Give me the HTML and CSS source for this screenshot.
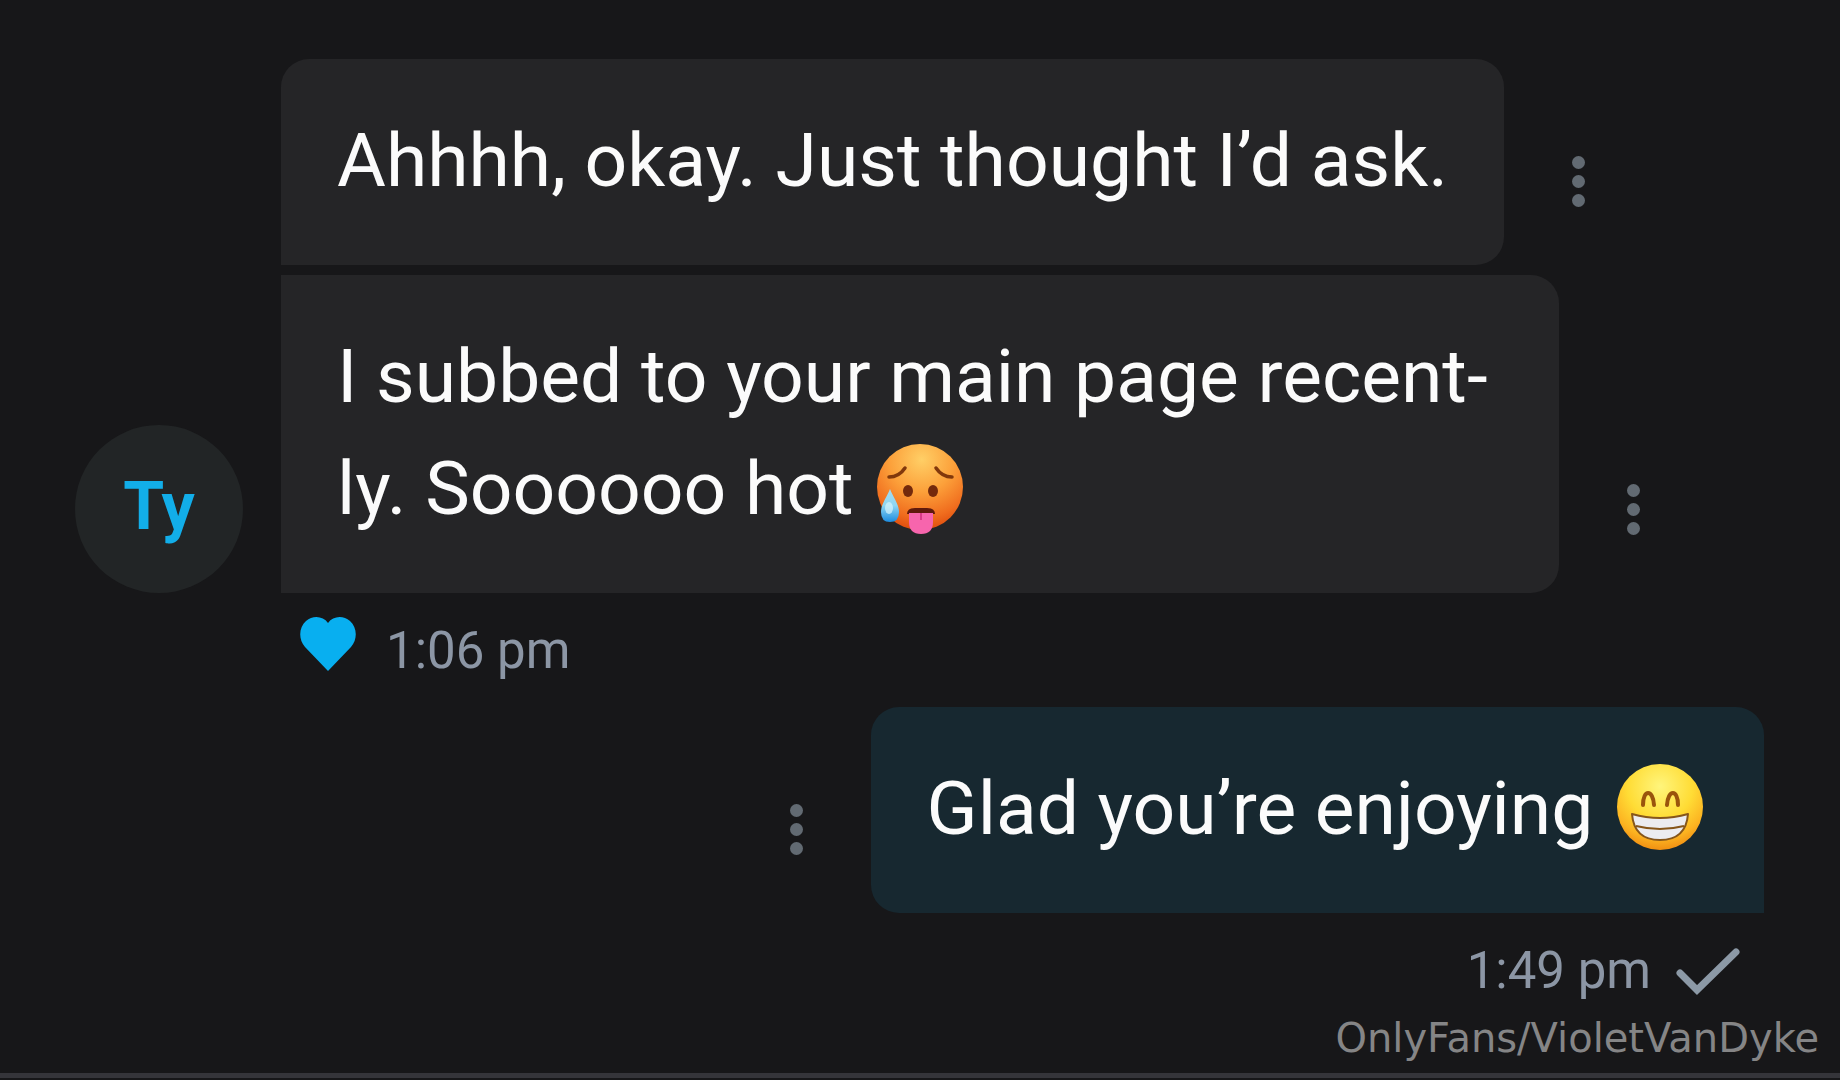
FILE: index.html
```html
<!DOCTYPE html>
<html lang="en">
<head>
<meta charset="utf-8">
<meta name="viewport" content="width=device-width, initial-scale=1">
<title>Chat</title>
<link rel="stylesheet" href="styles.css">
</head>
<body>
<main class="chat">
  <section class="group received">
    <div class="row">
      <p class="bubble first">Ahhhh, okay. Just thought I’d ask.</p>
      <button class="more" type="button" aria-label="Message options"><span class="dot"></span><span class="dot"></span><span class="dot"></span></button>
    </div>
    <div class="row">
      <div class="avatar">Ty</div>
      <p class="bubble">I subbed to your main page recent&shy;ly. Soooooo hot <svg class="emoji" viewBox="0 0 96 96" role="img" aria-label="hot face">
        <defs>
          <radialGradient id="hot" cx="52%" cy="18%" r="84%"><stop offset="0" stop-color="#ffcf66"/><stop offset=".45" stop-color="#fca03a"/><stop offset=".8" stop-color="#f06d1e"/><stop offset="1" stop-color="#de4a0c"/></radialGradient>
          <linearGradient id="tear" x1="0" y1="0" x2="0" y2="1"><stop offset="0" stop-color="#a5dcf0"/><stop offset=".5" stop-color="#8ed6f2"/><stop offset="1" stop-color="#1c8ce0"/></linearGradient>
        </defs>
        <circle cx="48" cy="48" r="43" fill="url(#hot)"/>
        <path d="M17 38q10 0 16-9M80 38q-10 0-16-9" fill="none" stroke="#81380c" stroke-width="3.5" stroke-linecap="round"/>
        <ellipse cx="36" cy="52" rx="5" ry="6" fill="#73290c"/><ellipse cx="61" cy="52" rx="5" ry="6" fill="#73290c"/>
        <path d="M35 75q0-6 8-6h12q8 0 8 6z" fill="#5f1a0c"/>
        <path d="M37 74h24v9q0 12-12 12T37 83z" fill="#f765ad"/><path d="M49 74v7" stroke="#d93b88" stroke-width="2"/>
        <path d="M18 50c3 8 9 15 9 23q0 10-9 10T9 73c0-8 6-15 9-23z" fill="url(#tear)"/><ellipse cx="17" cy="69" rx="4" ry="6" fill="#d9f5fc" opacity=".7"/>
      </svg></p>
      <button class="more" type="button" aria-label="Message options"><span class="dot"></span><span class="dot"></span><span class="dot"></span></button>
    </div>
    <div class="meta">
      <svg class="heart" viewBox="0 0 56 54" role="img" aria-label="Liked"><path d="M28 54 5 30C-2 22-1 10 6 4 13-2 23-1 28 6 33-1 43-2 50 4c7 6 8 18 1 26z" fill="#08aff0"/></svg>
      <time>1:06 pm</time>
    </div>
  </section>
  <section class="group sent">
    <div class="row">
      <button class="more" type="button" aria-label="Message options"><span class="dot"></span><span class="dot"></span><span class="dot"></span></button>
      <p class="bubble">Glad you’re enjoying <svg class="emoji" viewBox="0 0 96 96" role="img" aria-label="beaming face">
        <defs><radialGradient id="grin" cx="50%" cy="26%" r="76%"><stop offset="0" stop-color="#fff57c"/><stop offset=".5" stop-color="#ffdc35"/><stop offset=".8" stop-color="#fcb321"/><stop offset="1" stop-color="#ef8a10"/></radialGradient></defs>
        <circle cx="48" cy="48" r="43" fill="url(#grin)"/>
        <path d="M31 46c0-16 10-16 11 0M55 46c1-16 11-16 11 0" fill="none" stroke="#9a540c" stroke-width="4" stroke-linecap="round"/>
        <path d="M20 55q28 8 56 0-2 26-28 26T20 55z" fill="#ececf0" stroke="#86561b" stroke-width="2" stroke-linejoin="round"/>
        <path d="M24 67q24 6 48 0" fill="none" stroke="#86561b" stroke-width="2"/>
      </svg></p>
    </div>
    <div class="meta">
      <time>1:49 pm</time>
      <svg class="check" viewBox="0 0 64 48" role="img" aria-label="Sent"><path d="m4 25 17 17L60 4" fill="none" stroke="#8c99a6" stroke-width="7" stroke-linecap="round"/></svg>
    </div>
  </section>
</main>
<footer class="credit">OnlyFans/VioletVanDyke</footer>
</body>
</html>
```
FILE: styles.css
```css
* { box-sizing: border-box; }

body {
  margin: 0;
  background: #171719;
  color: #fbfbfb;
  font-family: Roboto, "Liberation Sans", sans-serif;
}

.chat {
  display: flex;
  flex-direction: column;
  gap: 22px;
  padding: 59px 76px 0 75px;
}

.group { display: flex; flex-direction: column; }

.row {
  display: flex;
  align-items: flex-end;
}

.received .row { padding-left: 206px; }
.received .row:has(.avatar) { padding-left: 0; }
.received .row + .row { margin-top: 10px; }
.sent .row { justify-content: flex-end; }

.avatar {
  flex: none;
  display: grid;
  place-items: center;
  width: 168px;
  height: 168px;
  margin-right: 38px;
  padding-bottom: 6px;
  border-radius: 50%;
  background: #222526;
  color: #12aee9;
  font-size: 66px;
  font-weight: 700;
}

.bubble {
  max-width: 1278px;
  margin: 0;
  padding: 45px 56px 49px;
  border-radius: 0 28px 28px 0;
  background: #252527;
  font-size: 75px;
  line-height: 112px;
}

.bubble.first { border-top-left-radius: 28px; }

.sent .bubble {
  border-radius: 28px 28px 0 28px;
  background: #172830;
}

.emoji {
  width: 96px;
  height: 96px;
  vertical-align: -21px;
}

.more {
  flex: none;
  display: flex;
  flex-direction: column;
  align-items: center;
  justify-content: center;
  gap: 6px;
  width: 148px;
  height: 168px;
  padding: 0;
  border: 0;
  background: none;
}

.dot {
  width: 13px;
  height: 13px;
  border-radius: 50%;
  background: #626a72;
}

.meta {
  display: flex;
  padding-top: 24px;
  color: #8c96a5;
  font-size: 51px;
  line-height: 68px;
}

.received .meta { gap: 30px; padding-left: 225px; }
.sent .meta { justify-content: flex-end; gap: 25px; padding-right: 24px; }

.heart { width: 56px; height: 54px; }
.check { width: 64px; height: 48px; margin-top: 11px; }

.credit {
  margin-top: 11px;
  padding: 0 21px 13px;
  border-bottom: 5px solid #35353a;
  color: #858586;
  font-family: "DejaVu Sans", sans-serif;
  font-size: 40px;
  line-height: 44px;
  text-align: right;
}
```
